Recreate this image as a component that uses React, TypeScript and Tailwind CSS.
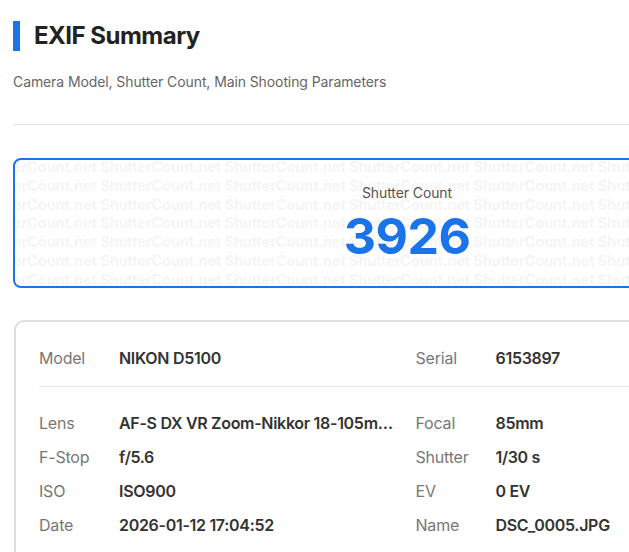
const WATERMARK = Array.from({ length: 8 }, () => "ShutterCount.net").join(" ");

const rows: [string, string, string, string][] = [
  ["Lens", "AF-S DX VR Zoom-Nikkor 18-105mm f/3.5-5.6G ED", "Focal", "85mm"],
  ["F-Stop", "f/5.6", "Shutter", "1/30 s"],
  ["ISO", "ISO900", "EV", "0 EV"],
  ["Date", "2026-01-12 17:04:52", "Name", "DSC_0005.JPG"],
];

function Field({ label, value }: { label: string; value: string }) {
  return (
    <div className="flex items-center min-w-0">
      <span className="w-20 shrink-0 text-[16px] leading-6 tracking-[-0.2px] text-[#777]">{label}</span>
      <span className="min-w-0 truncate text-[16px] leading-6 tracking-[-0.3px] font-semibold text-[#333]">
        {value}
      </span>
    </div>
  );
}

export default function App() {
  return (
    <div
      className="w-[820px] bg-white pl-[13px] pt-[21px] pb-10"
      style={{ fontFamily: "Inter, 'Noto Sans', sans-serif" }}
    >
      <div className="w-[788px]">
        {/* Header */}
        <div className="flex items-center gap-[14px] h-[30px]">
          <div className="w-[7px] h-[30px] bg-[#1a73e8]" />
          <h1 className="text-[24px] font-bold tracking-[-0.5px] text-[#222]">EXIF Summary</h1>
        </div>
        <p className="mt-[21px] text-[14px] leading-5 tracking-[-0.1px] text-[#666]">
          Camera Model, Shutter Count, Main Shooting Parameters
        </p>
        <div className="mt-[32px] border-t border-[#e0e0e0]" />

        {/* Shutter count */}
        <div className="relative mt-[33px] h-[130px] overflow-hidden rounded-lg border-2 border-[#1a73e8] bg-white">
          <div className="absolute inset-0 -left-[39px] -top-[2px] select-none">
            {Array.from({ length: 7 }).map((_, i) => (
              <div
                key={i}
                className="whitespace-nowrap text-[14.5px] leading-[18.8px] font-semibold text-[#f4f4f4]"
              >
                {WATERMARK}
              </div>
            ))}
          </div>
          <div className="relative flex flex-col items-center pt-[23px]">
            <span className="text-[14px] leading-5 tracking-[-0.1px] text-[#555]">Shutter Count</span>
            <span className="mt-[5px] text-[50px] leading-[56px] font-bold tracking-[-0.5px] text-[#1a73e8]">
              3926
            </span>
          </div>
        </div>

        {/* Details */}
        <div className="mt-[32px] ml-px rounded-[10px] border-2 border-[#dedede] px-[23px] pt-[24px] pb-6">
          <div className="grid grid-cols-2 gap-x-4 pb-4 border-b border-[#e5e5e5]">
            <Field label="Model" value="NIKON D5100" />
            <Field label="Serial" value="6153897" />
          </div>
          <div className="mt-6 grid grid-cols-2 gap-x-4 gap-y-[10px]">
            {rows.map(([l1, v1, l2, v2]) => [
              <Field key={l1} label={l1} value={v1} />,
              <Field key={l2} label={l2} value={v2} />,
            ])}
          </div>
        </div>
      </div>
    </div>
  );
}
